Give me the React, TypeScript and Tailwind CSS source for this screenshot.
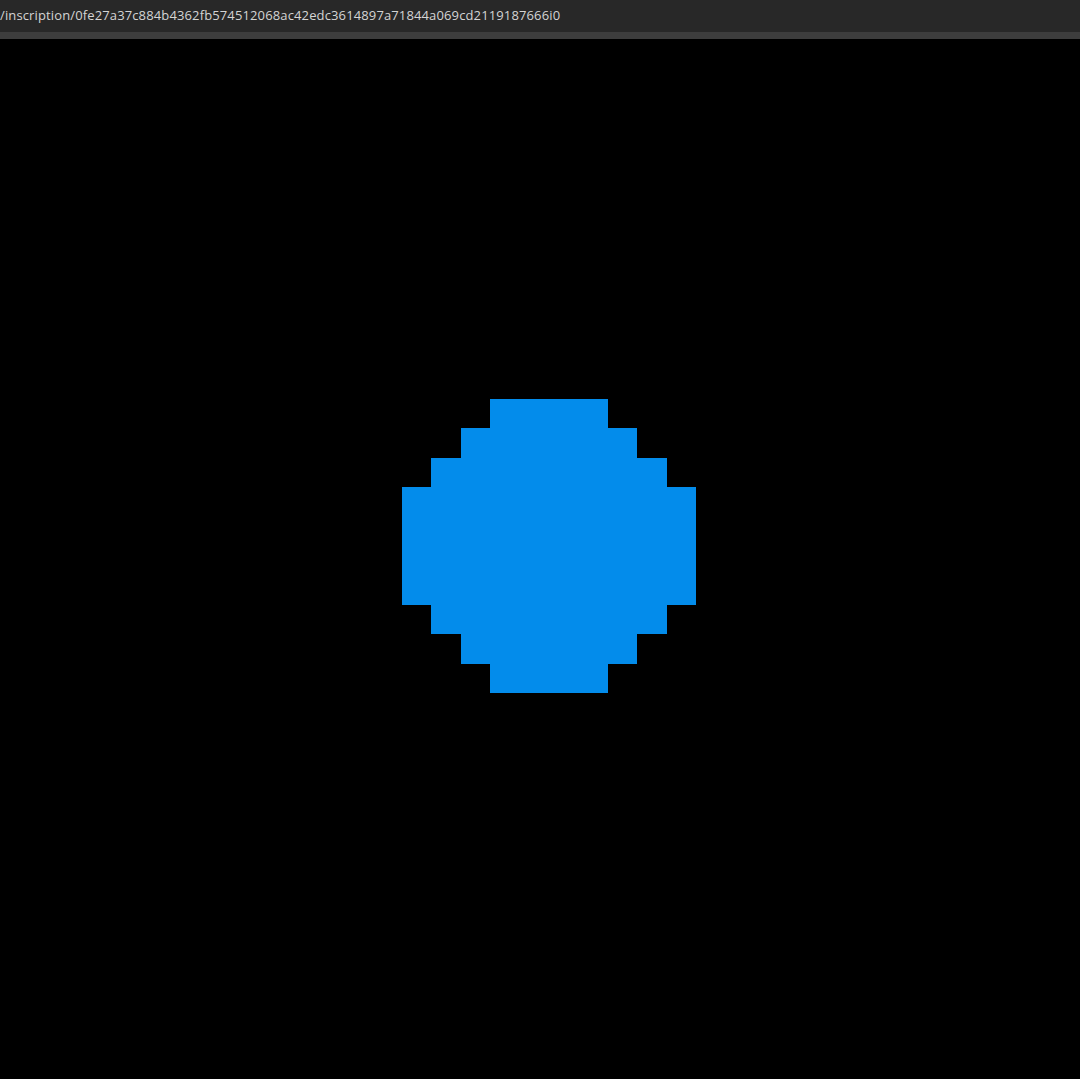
export default function App() {
  const rows: [number, number][] = [
    [3, 7],
    [2, 8],
    [1, 9],
    [0, 10],
    [0, 10],
    [0, 10],
    [0, 10],
    [1, 9],
    [2, 8],
    [3, 7],
  ];
  return (
    <div className="flex h-[1079px] w-[1080px] flex-col overflow-hidden bg-black">
      <div className="flex h-[32px] shrink-0 items-center bg-[#282828] text-[13px] tracking-[0.13px] text-[#d4d4d4] [font-family:'Open_Sans',sans-serif]">
        /inscription/0fe27a37c884b4362fb574512068ac42edc3614897a71844a069cd2119187666i0
      </div>
      <div className="h-[7px] shrink-0 bg-[#3d3d3d]" />
      <div className="flex-1 pl-[402px] pt-[360px]">
        <svg width="294" height="294" viewBox="0 0 10 10" shapeRendering="crispEdges">
          {rows.map(([a, b], i) => (
            <rect key={i} x={a} y={i} width={b - a} height={1} fill="#038ceb" />
          ))}
        </svg>
      </div>
    </div>
  );
}
